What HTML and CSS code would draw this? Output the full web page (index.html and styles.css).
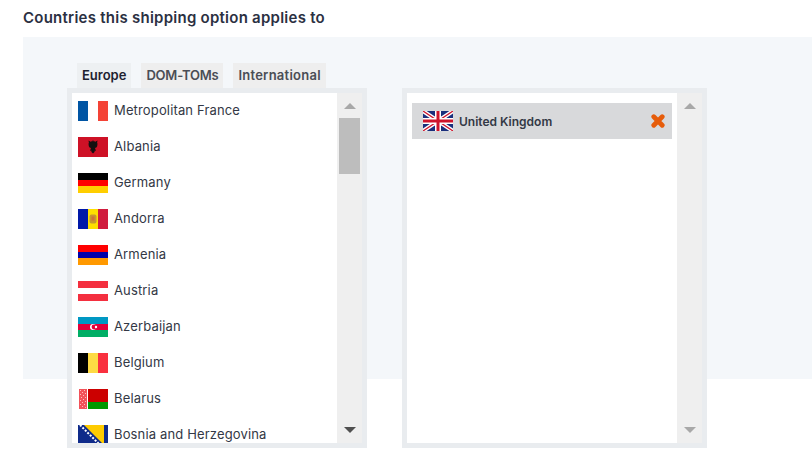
FILE: index.html
```html
<!DOCTYPE html>
<html lang="en">
<head>
<meta charset="utf-8">
<title>Shipping countries</title>
<link rel="stylesheet" href="styles.css">
</head>
<body>
<h1 class="title">Countries this shipping option applies to</h1>
<section class="panel">
  <div class="tabs">
    <div class="tab active">Europe</div>
    <div class="tab tab-narrow">DOM-TOMs</div>
    <div class="tab tab-wide">International</div>
  </div>
  <div class="columns">
    <div class="box">
      <ul class="list">
        <li class="row"><svg class="flag" viewBox="0 0 30 20"><rect width="10" height="20" fill="#0055a4"/><rect x="10" width="10" height="20" fill="#fff"/><rect x="20" width="10" height="20" fill="#f44336"/></svg><span class="name">Metropolitan France</span></li>
        <li class="row"><svg class="flag" viewBox="0 0 30 20"><rect width="30" height="20" fill="#ce1126"/><path d="M15 3l.8 1.500 1-.5v1l2.700-1.500-.5 3 .8 0-.8 2 .6 0-1.200 2-1.400.5 1 3-1.200-.5-.3 1.500-1.500 1.500-1.500-1.500-.3-1.500-1.200.5 1-3-1.400-.5-1.200-2 .6 0-.8-2 .8 0-.5-3 2.700 1.500v-1l1 .5z" fill="#151010"/></svg><span class="name">Albania</span></li>
        <li class="row"><svg class="flag" viewBox="0 0 30 20"><rect width="30" height="7" fill="#000"/><rect y="7" width="30" height="6" fill="#f00"/><rect y="13" width="30" height="7" fill="#ffce00"/></svg><span class="name">Germany</span></li>
        <li class="row"><svg class="flag" viewBox="0 0 30 20"><rect width="10" height="20" fill="#0018a8"/><rect x="10" width="10" height="20" fill="#fedf00"/><rect x="20" width="10" height="20" fill="#d01c3e"/><rect x="11.500" y="5.500" width="7" height="9" rx="2" fill="#c7982e"/><rect x="13.500" y="7.500" width="3" height="4" fill="#d0703a"/></svg><span class="name">Andorra</span></li>
        <li class="row"><svg class="flag" viewBox="0 0 30 20"><rect width="30" height="7" fill="#f00"/><rect y="7" width="30" height="6" fill="#00a"/><rect y="13" width="30" height="7" fill="#f90"/></svg><span class="name">Armenia</span></li>
        <li class="row"><svg class="flag" viewBox="0 0 30 20"><rect width="30" height="7" fill="#f42f3f"/><rect y="13" width="30" height="7" fill="#f42f3f"/></svg><span class="name">Austria</span></li>
        <li class="row"><svg class="flag" viewBox="0 0 30 20"><rect width="30" height="7" fill="#0098c3"/><rect y="7" width="30" height="6" fill="#e4003a"/><rect y="13" width="30" height="7" fill="#00ae65"/><circle cx="15" cy="10" r="3" fill="#fff"/><circle cx="16" cy="10" r="2.400" fill="#e4003a"/><circle cx="18" cy="10" r="1.200" fill="#fff"/></svg><span class="name">Azerbaijan</span></li>
        <li class="row"><svg class="flag" viewBox="0 0 30 20"><rect width="10" height="20" fill="#000"/><rect x="10" width="10" height="20" fill="#fdda44"/><rect x="20" width="10" height="20" fill="#f9303f"/></svg><span class="name">Belgium</span></li>
        <li class="row"><svg class="flag" viewBox="0 0 30 20"><rect x="1" width="8" height="20" fill="#f2525a"/><path d="M2 1h1v1H2zM6 1h1v1H6zM4 3h1v1H4zM7 4h1v1H7zM2 5h1v1H2zM5 6h1v1H5zM3 8h1v1H3zM7 8h1v1H7zM5 10h1v1H5zM2 11h1v1H2zM7 12h1v1H7zM4 13h1v1H4zM2 15h1v1H2zM6 15h1v1H6zM4 17h1v1H4zM7 18h1v1H7z" fill="#fbb"/><rect x="10" width="20" height="13" fill="#c00"/><rect x="10" y="13" width="20" height="7" fill="#090"/></svg><span class="name">Belarus</span></li>
        <li class="row"><svg class="flag" viewBox="0 0 30 20"><rect width="30" height="20" fill="#0f2b8a"/><path d="M6 0h20v20z" fill="#fecb00"/><path d="M2 0l20 20" stroke="#fff" stroke-width="2" stroke-dasharray="2 1.500"/></svg><span class="name">Bosnia and Herzegovina</span></li>
      </ul>
      <div class="scrollbar">
        <span class="arrow up"></span>
        <span class="thumb"></span>
        <span class="arrow down dark"></span>
      </div>
    </div>
    <div class="box selected">
      <div class="list">
        <div class="chip">
          <svg class="flag" viewBox="0 0 30 20">
            <rect width="30" height="20" fill="#1a2f7c"/>
            <path d="M0 0L30 20M30 0L0 20" stroke="#fff" stroke-width="4"/>
            <path d="M0 0L30 20M30 0L0 20" stroke="#cf142b" stroke-width="1.300"/>
            <path d="M15 0V20M0 10H30" stroke="#fff" stroke-width="6"/>
            <path d="M15 0V20M0 10H30" stroke="#cf142b" stroke-width="3"/>
          </svg>
          <span class="chip-name">United Kingdom</span>
          <svg class="remove" viewBox="0 0 14 14"><path d="M2.800 2.800L11.200 11.200M11.200 2.800L2.800 11.200" stroke="#e65c0a" stroke-width="4.800" stroke-linecap="round"/></svg>
        </div>
      </div>
      <div class="scrollbar">
        <span class="arrow up"></span>
        <span class="arrow down"></span>
      </div>
    </div>
  </div>
</section>
</body>
</html>
```
FILE: styles.css
```css
* { box-sizing: border-box; }
html, body { margin: 0; height: 100%; }
body {
  width: 812px;
  height: 459px;
  overflow: hidden;
  background: #fff;
  color: #2f3445;
  font-family: Inter, "Open Sans", "Liberation Sans", sans-serif;
  padding-left: 23px;
}
.title {
  margin: 0;
  height: 37px;
  padding-top: 9px;
  font-size: 15px;
  line-height: 18px;
  font-weight: 600;
  letter-spacing: .25px;
  color: #2b3042;
}
.panel {
  height: 342px;
  background: #f4f7fa;
  padding: 26px 0 0 44px;
}
.tabs {
  display: flex;
  gap: 10px;
  height: 25px;
  padding-left: 10px;
}
.tab {
  padding: 0 5px;
  background: #eeeeee;
  font-size: 13px;
  line-height: 25px;
  font-weight: 600;
  color: #4a4d55;
}
.tab.active { background: #edf0f2; color: #1e2230; }
.tab-narrow { letter-spacing: -.22px; }
.tab-wide { letter-spacing: .25px; }
.columns {
  display: flex;
  gap: 35px;
}
.box {
  display: flex;
  width: 300px;
  height: 360px;
  border: 5px solid #e9ecef;
}
.box.selected { width: 305px; }
.list {
  flex: 1;
  margin: 0;
  padding: 0;
  list-style: none;
  background: #fff;
  overflow: hidden;
}
.row {
  display: flex;
  align-items: center;
  gap: 6px;
  height: 36px;
  padding-left: 6px;
  flex-shrink: 0;
  font-size: 13px;
  letter-spacing: .15px;
  line-height: 15px;
  color: #333845;
}
.name { margin-bottom: 2px; }
.flag { display: block; width: 30px; height: 20px; flex-shrink: 0; }
.scrollbar {
  display: flex;
  flex-direction: column;
  align-items: center;
  width: 25px;
  padding-top: 10px;
  background: #efefef;
}
.arrow { display: block; width: 0; height: 0; border-left: 6px solid transparent; border-right: 6px solid transparent; }
.arrow.up { border-bottom: 6px solid #a8a8a8; }
.arrow.down { margin-top: auto; margin-bottom: 10px; border-top: 6px solid #a8a8a8; }
.arrow.dark { border-top-color: #505050; }
.thumb { width: 21px; height: 56px; margin-top: 9px; background: #bdbdbd; }
.chip {
  display: flex;
  align-items: center;
  width: 260px;
  height: 36px;
  margin: 10px 0 0 5px;
  padding: 0 7px 0 11px;
  background: #d8d9db;
}
.chip-name {
  flex: 1;
  margin-left: 6px;
  font-size: 12px;
  font-weight: 600;
  color: #333845;
}
.remove { display: block; width: 14px; height: 14px; }
```
